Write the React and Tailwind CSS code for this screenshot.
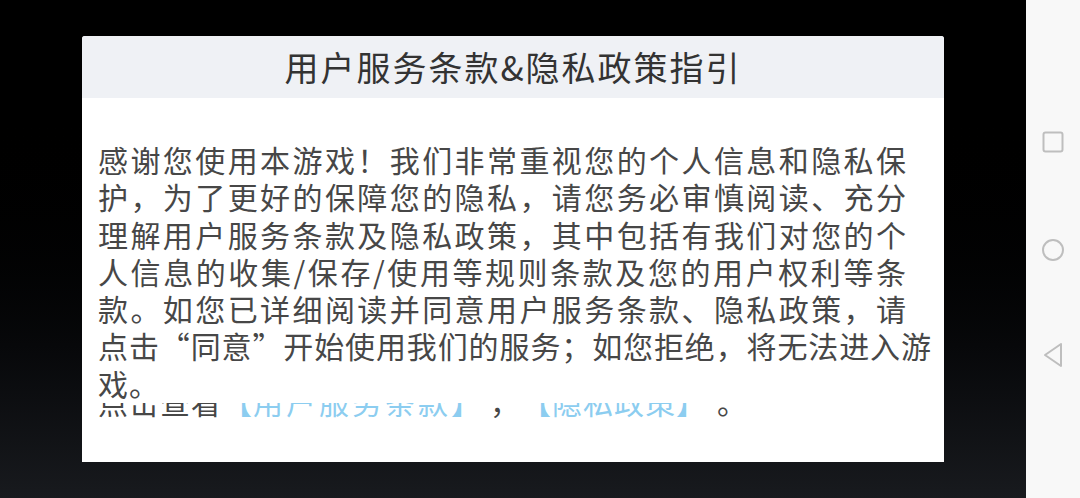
import React from "react";

const lines = [
  "感谢您使用本游戏！我们非常重视您的个人信息和隐私保",
  "护，为了更好的保障您的隐私，请您务必审慎阅读、充分",
  "理解用户服务条款及隐私政策，其中包括有我们对您的个",
  "人信息的收集/保存/使用等规则条款及您的用户权利等条",
  "款。如您已详细阅读并同意用户服务条款、隐私政策，请",
];

export default function App() {
  return (
    <div
      className="flex h-[498px] w-[1080px] overflow-hidden [text-spacing-trim:space-all]"
      style={{ fontFamily: '"Noto Sans CJK SC", "Noto Sans", sans-serif' }}
    >
      <div className="flex-1 bg-gradient-to-b from-black from-20% to-[#181a1e] pl-[82px] pt-[36px]">
        <div className="flex h-[426px] w-[862px] flex-col overflow-hidden rounded-t-[3px] bg-white">
          <div className="flex h-[62px] items-center justify-center bg-[#eff1f5] text-[34px] leading-none tracking-[2px] text-[#333333]">
            用户服务条款&amp;隐私政策指引
          </div>
          <div className="flex flex-col pl-[16px] pt-[43px] text-[30px] leading-[37.3px] text-[#474747]">
            {lines.map((l, i) => (
              <div key={i} className="w-[808px] whitespace-nowrap text-justify [text-align-last:justify] [text-justify:inter-character]">
                {l}
              </div>
            ))}
            <div className="w-[833px] whitespace-nowrap text-justify [text-align-last:justify] [text-justify:inter-character]">
              点击“同意”开始使用我们的服务；如您拒绝，将无法进入游
            </div>
            <div className="whitespace-nowrap tracking-[1px]">戏。</div>
            <div className="mt-[1px] h-[18px] overflow-hidden">
              <div className="-mt-[20px] whitespace-nowrap tracking-[1px]">
                点击查看
                <span className="text-[#8ccdf0]">
                  【<span className="tracking-[3px]">用户服务条款</span>】
                </span>
                <span className="ml-[8px]">，</span>
                <span className="text-[#8ccdf0]">【隐私政策】</span>
                <span className="ml-[10px]">。</span>
              </div>
            </div>
          </div>
        </div>
      </div>
      <div className="flex w-[54px] flex-col items-center bg-[#f8f8f8] pt-[131px]">
        <svg width="22" height="22" viewBox="0 0 22 22">
          <rect x="1.5" y="1.5" width="19" height="19" rx="2" fill="none" stroke="#bebebe" strokeWidth="2" />
        </svg>
        <svg className="mt-[85px]" width="24" height="24" viewBox="0 0 24 24">
          <circle cx="12" cy="12" r="10" fill="none" stroke="#bebebe" strokeWidth="2" />
        </svg>
        <svg className="mt-[80px]" width="22" height="26" viewBox="0 0 22 26">
          <path d="M19 2 L3 13 L19 24 Z" fill="none" stroke="#bebebe" strokeWidth="2" strokeLinejoin="round" />
        </svg>
      </div>
    </div>
  );
}
